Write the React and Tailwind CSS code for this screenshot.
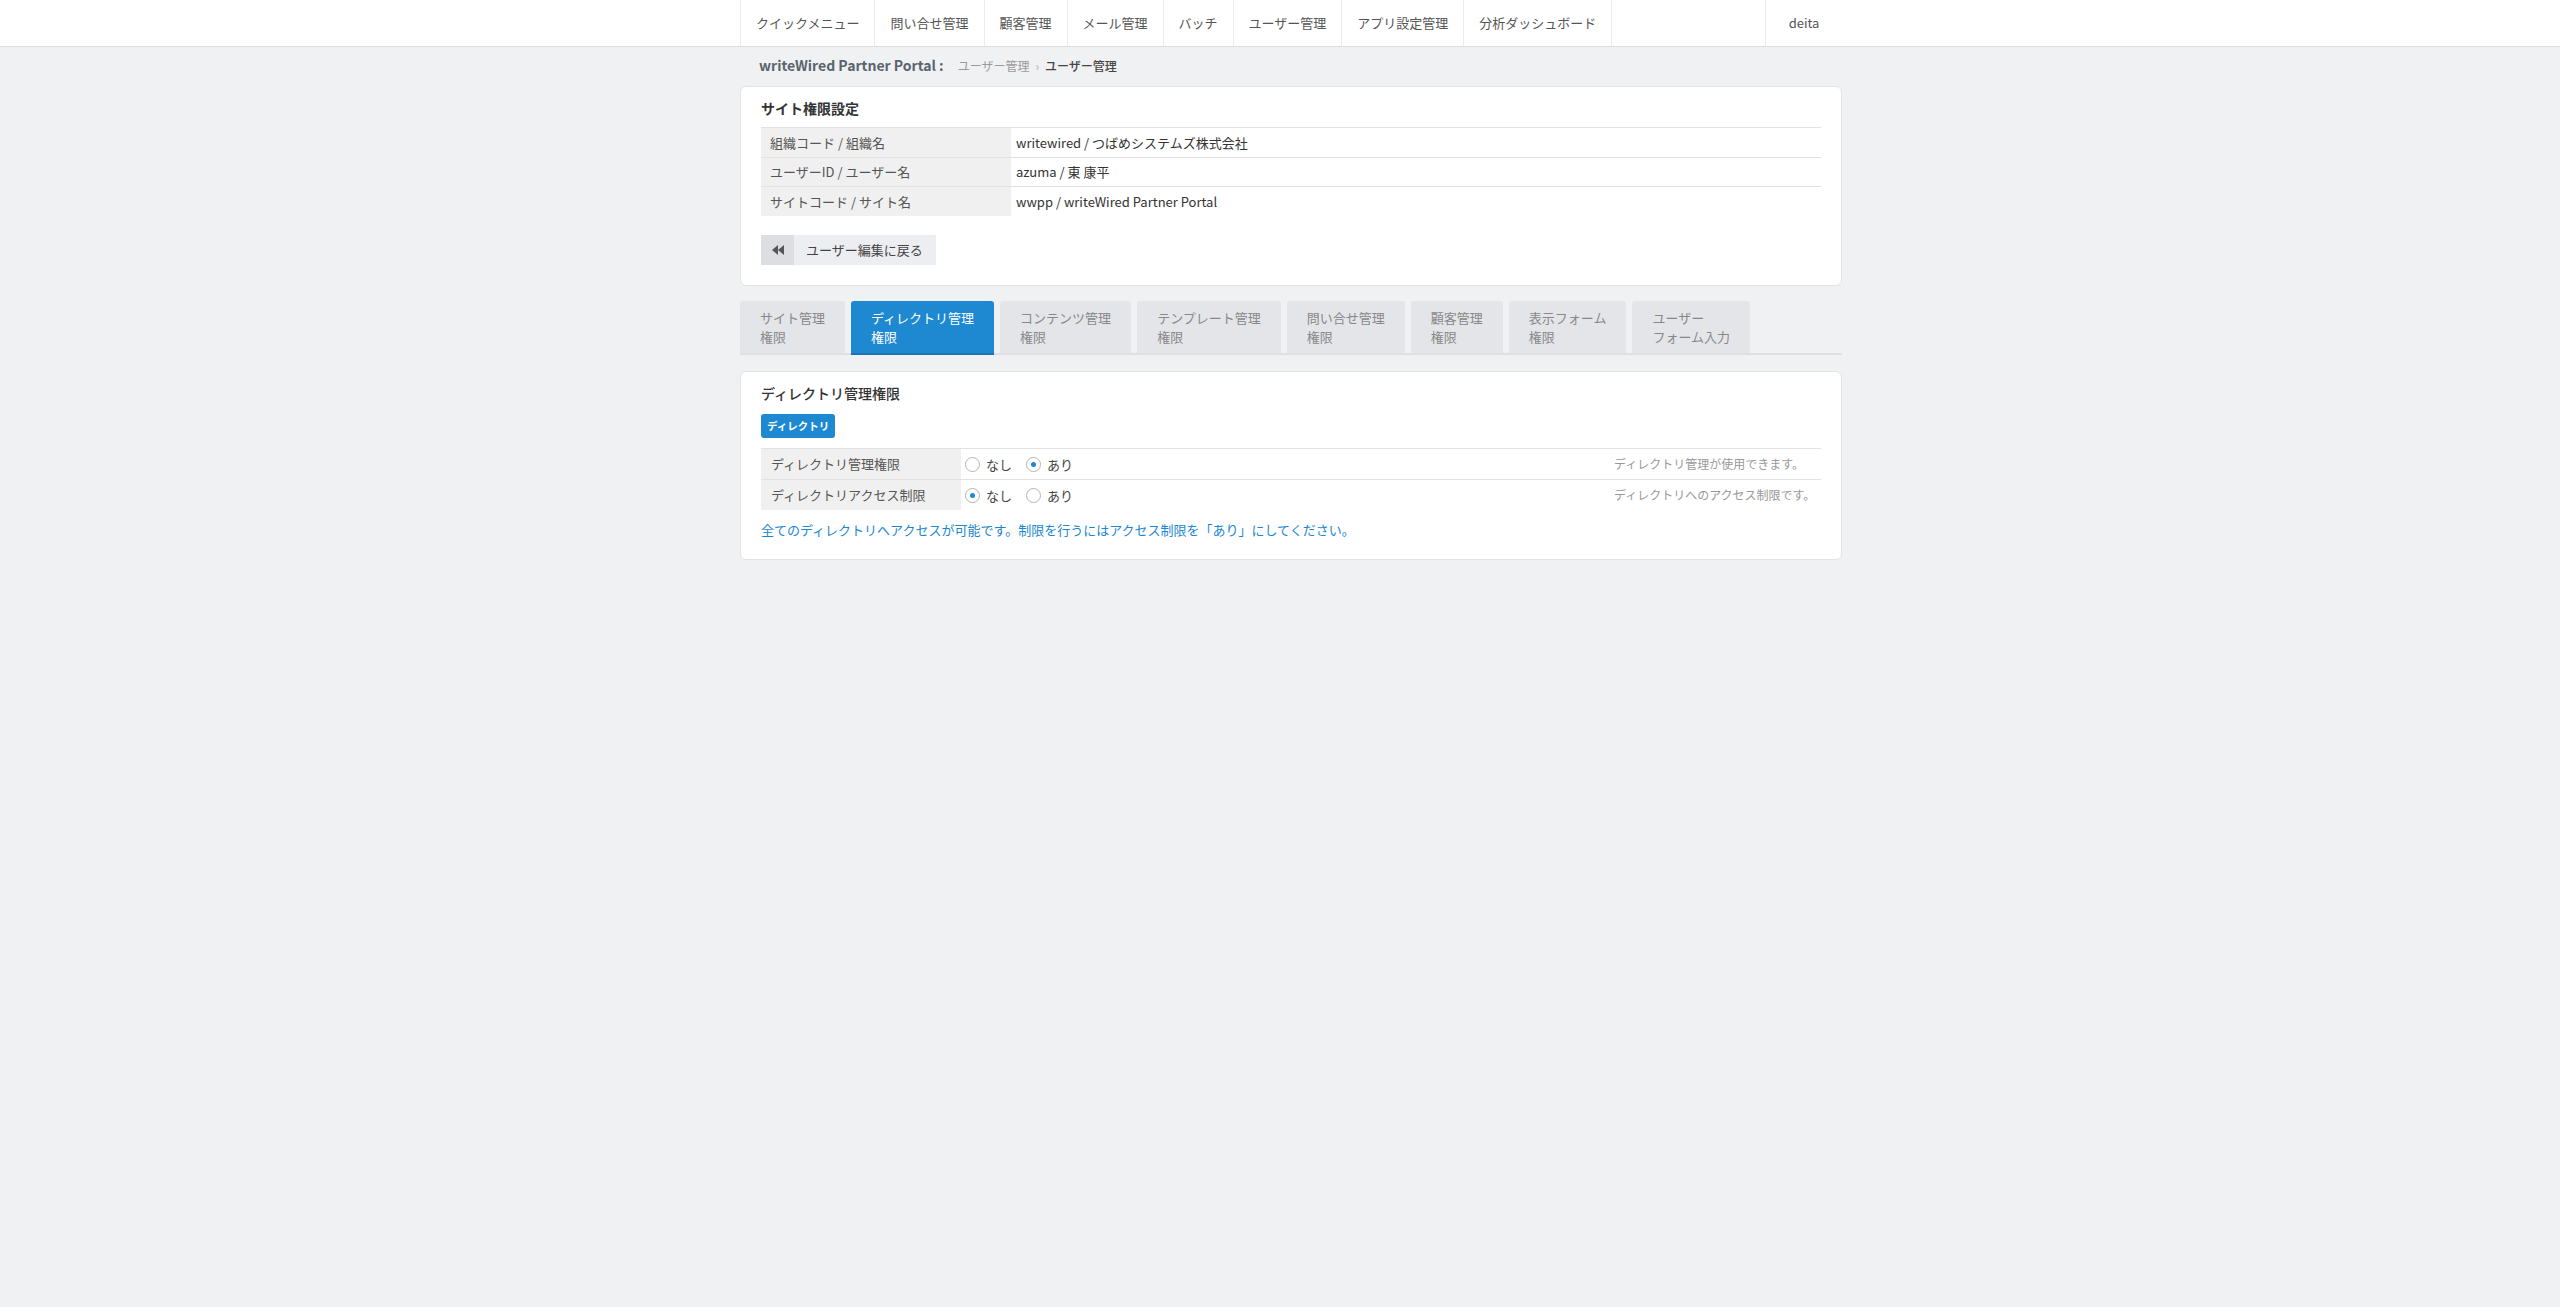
import React from 'react';

const navItems = ['クイックメニュー', '問い合せ管理', '顧客管理', 'メール管理', 'バッチ', 'ユーザー管理', 'アプリ設定管理', '分析ダッシュボード'];

const tabs = [
    ['サイト管理', '権限'],
    ['ディレクトリ管理', '権限'],
    ['コンテンツ管理', '権限'],
    ['テンプレート管理', '権限'],
    ['問い合せ管理', '権限'],
    ['顧客管理', '権限'],
    ['表示フォーム', '権限'],
    ['ユーザー', 'フォーム入力'],
];

const siteRows = [
    ['組織コード / 組織名', 'writewired / つばめシステムズ株式会社'],
    ['ユーザーID / ユーザー名', 'azuma / 東 康平'],
    ['サイトコード / サイト名', 'wwpp / writeWired Partner Portal'],
];

const dirRows = [
    { label: 'ディレクトリ管理権限', value: 'on', note: 'ディレクトリ管理が使用できます。' },
    { label: 'ディレクトリアクセス制限', value: 'off', note: 'ディレクトリへのアクセス制限です。' },
];

const Radio = ({ checked, label }) => (
    <span className="flex items-center gap-[6px]">
        <span className="w-[15px] h-[15px] rounded-full border border-[#b4b4b4] bg-white flex items-center justify-center">
            {checked && <span className="w-[5px] h-[5px] rounded-full bg-[#1e88d0]"></span>}
        </span>
        <span className="text-[13px] text-[#444]">{label}</span>
    </span>
);

const App = () => {
    return (
        <div className="min-h-screen bg-[#f0f1f3] text-[#333]" style={{ fontFamily: '"Noto Sans CJK JP", "Noto Sans", sans-serif' }}>
            {/* top navigation */}
            <div className="bg-white border-b border-[#dedfe2]">
                <div className="mx-auto w-[1124px] pl-[22px] flex h-[46px]">
                    <div className="flex border-r border-[#ececec]">
                        {navItems.map((item) => (
                            <div key={item} className="px-[15px] flex items-center border-l border-[#ececec] text-[13px] text-[#555] whitespace-nowrap">
                                {item}
                            </div>
                        ))}
                    </div>
                    <div className="flex-1"></div>
                    <div className="w-[77px] flex items-center justify-center border-l border-[#ececec] text-[13px] text-[#555]">deita</div>
                </div>
            </div>

            <div className="mx-auto w-[1124px] pl-[22px]">
                {/* breadcrumb */}
                <div className="h-[39px] pb-[2px] flex items-center pl-[19px]">
                    <span className="text-[14px] font-bold text-[#5b636d]">writeWired Partner Portal :</span>
                    <span className="ml-[14px] text-[12px] text-[#9a9a9a]">ユーザー管理</span>
                    <span className="mx-[6px] text-[12px] text-[#b0b0b0]">›</span>
                    <span className="text-[12px] text-[#444] font-medium">ユーザー管理</span>
                </div>

                {/* site permission card */}
                <div className="bg-white border border-[#e2e3e6] rounded-md px-5 pt-[11px] pb-[20px]">
                    <div className="text-[14px] font-bold leading-[20px] text-[#333]">サイト権限設定</div>
                    <div className="mt-[9px]">
                        {siteRows.map(([label, value]) => (
                            <div key={label} className="flex h-[29.5px] border-t border-[#e2e2e2]">
                                <div className="w-[250px] bg-[#f0f0f0] pl-[9px] flex items-center text-[13px] text-[#555]">{label}</div>
                                <div className="flex-1 pl-[5px] flex items-center text-[13px] text-[#333]">{value}</div>
                            </div>
                        ))}
                    </div>
                    <button className="mt-[19px] flex h-[30px] text-[13px] text-[#444]">
                        <span className="w-[33px] h-full bg-[#dcdee2] flex items-center justify-center">
                            <svg width="12" height="10" viewBox="0 0 12 10" fill="#555">
                                <polygon points="6,0 0,5 6,10" />
                                <polygon points="12,0 6,5 12,10" />
                            </svg>
                        </span>
                        <span className="h-full bg-[#eceef1] pl-[12px] pr-[13px] flex items-center">ユーザー編集に戻る</span>
                    </button>
                </div>

                {/* permission tabs */}
                <div className="mt-[15px] flex items-start gap-[6px] border-b-2 border-[#dfe0e3]">
                    {tabs.map(([a, b], i) => (
                        <div
                            key={a + b}
                            className={
                                i === 1
                                    ? 'px-5 h-[54px] -mb-[2px] pt-[7px] rounded-t-[3px] bg-[#1e88d0] border-b-2 border-[#1873b3] text-white text-[13px] leading-[19px] whitespace-nowrap'
                                    : 'px-5 h-[52px] pt-[7px] rounded-t-[3px] bg-[#e4e5e8] text-[#888] text-[13px] leading-[19px] whitespace-nowrap'
                            }
                        >
                            <div>{a}</div>
                            <div>{b}</div>
                        </div>
                    ))}
                </div>

                {/* directory permission card */}
                <div className="mt-[16px] bg-white border border-[#e2e3e6] rounded-md px-5 pt-[11px] pb-[19px]">
                    <div className="text-[14px] font-medium leading-[20px] text-[#333]">ディレクトリ管理権限</div>
                    <div className="mt-[11px] inline-flex items-center h-[24px] px-[6px] rounded-[3px] bg-[#1e88d0] text-white text-[10.5px] font-bold">ディレクトリ</div>
                    <div className="mt-[10px]">
                        {dirRows.map((row) => (
                            <div key={row.label} className="grid grid-cols-[200px_1fr_222px] h-[31px] border-t border-[#e2e2e2]">
                                <div className="bg-[#f0f0f0] pl-[10px] flex items-center text-[13px] text-[#555]">{row.label}</div>
                                <div className="pl-[4px] pt-[2px] flex items-center gap-[14px]">
                                    <Radio checked={row.value === 'off'} label="なし" />
                                    <Radio checked={row.value === 'on'} label="あり" />
                                </div>
                                <div className="pl-[15px] flex items-center text-[12px] text-[#999] whitespace-nowrap">{row.note}</div>
                            </div>
                        ))}
                    </div>
                    <div className="mt-[10px] text-[13px] leading-[20px] text-[#1a87cf]">
                        全てのディレクトリへアクセスが可能です。制限を行うにはアクセス制限を「あり」にしてください。
                    </div>
                </div>
            </div>
        </div>
    );
};

export default App;
